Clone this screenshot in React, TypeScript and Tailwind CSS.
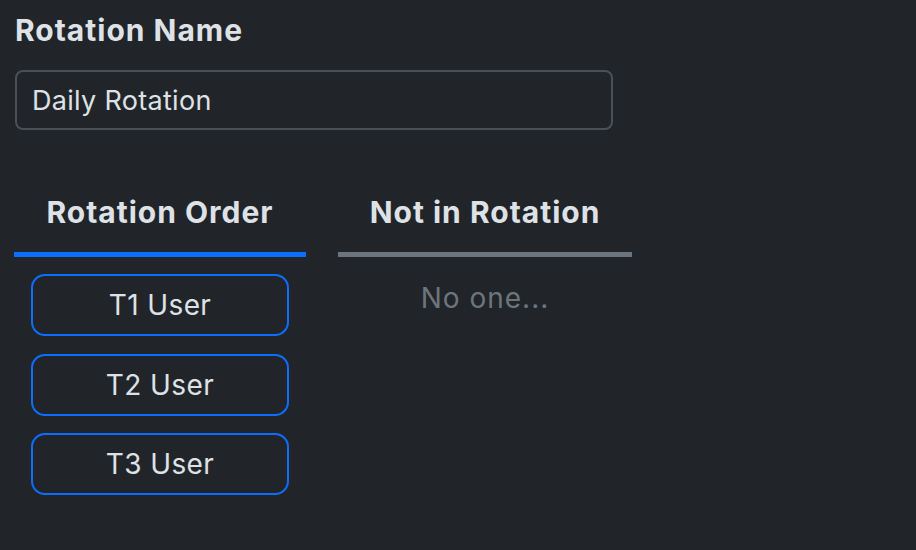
import React from "react";

const members = ["T1 User", "T2 User", "T3 User"];

export default function App() {
  return (
    <div className="min-h-[550px] w-[916px] bg-[#212529] px-[15px] pt-[12px] font-['Inter',sans-serif] text-[#dee2e6]">
      <label className="block text-[30px] font-bold leading-[36px] tracking-[1px]">
        Rotation Name
      </label>
      <input
        className="mt-[22px] block h-[60px] w-[598px] rounded-[8px] border-2 border-[#495057] bg-[#212529] px-[15px] text-[27px] tracking-[0.3px] text-[#dee2e6] outline-none"
        defaultValue="Daily Rotation"
      />

      <div className="mt-[42px] flex gap-[32px] -ml-px">
        <div className="w-[292px]">
          <div className="flex h-[85px] items-center justify-center border-b-[5px] border-[#0d6efd] pt-px text-[30px] font-bold tracking-[1px]">
            Rotation Order
          </div>
          <div className="flex flex-col gap-[17.5px] px-[17px] pt-[17px]">
            {members.map((m) => (
              <button
                key={m}
                className="flex h-[62px] items-center justify-center rounded-[14px] border-2 border-[#0d6efd] text-[28px] tracking-[0.4px]"
              >
                {m}
              </button>
            ))}
          </div>
        </div>
        <div className="w-[294px]">
          <div className="flex h-[85px] items-center justify-center border-b-[5px] border-[#6c757d] pt-px text-[30px] font-bold tracking-[1px]">
            Not in Rotation
          </div>
          <p className="pt-[24px] text-center text-[28px] leading-[34px] tracking-[1px] text-[#6c757d]">
            No one...
          </p>
        </div>
      </div>
    </div>
  );
}
